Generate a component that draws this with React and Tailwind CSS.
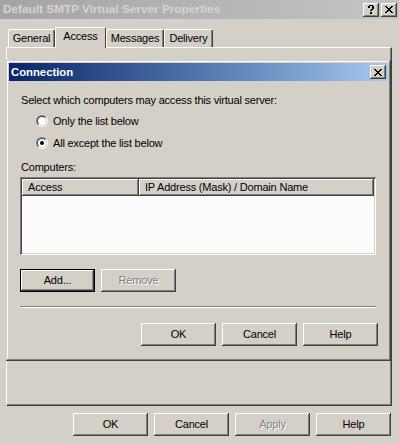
import React from 'react';

const RAISED = 'shadow-[inset_-1px_-1px_0_#404040,inset_1px_1px_0_#ffffff,inset_-2px_-2px_0_#808080,inset_2px_2px_0_#d4d0c8]';

const Button = ({ children, disabled, isDefault }) => (
  <div className={`w-[75px] h-[23px] ${isDefault ? 'border border-black' : ''}`}>
    <div className={`w-full h-full flex items-center justify-center ${RAISED}`}>
      <span className={disabled ? 'text-[#808080] [text-shadow:1px_1px_0_#ffffff]' : 'text-black'}>{children}</span>
    </div>
  </div>
);

const CloseGlyph = () => (
  <svg width="8" height="7" viewBox="0 0 8 7" shapeRendering="crispEdges">
    <path d="M0 0h2v1H0zM6 0h2v1H6zM1 1h2v1H1zM5 1h2v1H5zM2 2h4v1H2zM3 3h2v1H3zM2 4h4v1H2zM1 5h2v1H1zM5 5h2v1H5zM0 6h2v1H0zM6 6h2v1H6z" fill="#000" />
  </svg>
);

const HelpGlyph = () => (
  <svg width="6" height="9" viewBox="0 0 6 9" shapeRendering="crispEdges">
    <path d="M1 0h4v1H1zM0 1h2v2H0zM4 1h2v3H4zM3 4h2v1H3zM2 5h2v1H2zM2 7h2v2H2z" fill="#000" />
  </svg>
);

const CaptionButton = ({ children }) => (
  <div className={`w-[16px] h-[14px] bg-[#d4d0c8] flex items-center justify-center ${RAISED}`}>
    {children}
  </div>
);

const Radio = ({ checked, label }) => (
  <div className="h-[22px] flex items-center gap-[5px] pl-[27px]">
    <div className="w-[12px] h-[12px] rounded-full border border-t-[#808080] border-l-[#808080] border-r-white border-b-white">
      <div className="w-full h-full rounded-full border border-t-[#404040] border-l-[#404040] border-r-[#d4d0c8] border-b-[#d4d0c8] bg-white flex items-center justify-center">
        {checked && <div className="w-[4px] h-[4px] rounded-full bg-black" />}
      </div>
    </div>
    <span>{label}</span>
  </div>
);

const Tab = ({ label, width, selected }) => (
  <div
    className={`${width} flex items-center justify-center rounded-t-[2px] border-t border-l border-r border-t-white border-l-white border-r-[#404040] bg-[#d4d0c8] ${
      selected ? 'h-[21px] -mb-px relative z-10 pb-[3px]' : 'h-[18px] pb-px shadow-[inset_-1px_0_0_#808080]'
    }`}
  >
    {label}
  </div>
);

export default function App() {
  return (
    <div className="w-[399px] h-[444px] overflow-hidden bg-[#d4d0c8] text-[11px] leading-[13px] tracking-[-0.2px] text-black font-['Tahoma','Liberation_Sans',Arial,sans-serif] flex flex-col">
      {/* outer (inactive) caption */}
      <div className="h-[19px] pl-[3px] pr-[2px] flex items-center justify-between bg-gradient-to-r from-[#a4a4a4] to-[#c4c4c4]">
        <span className="font-bold text-[11.8px] tracking-normal text-[#d8d4cc]">Default SMTP Virtual Server Properties</span>
        <div className="flex gap-[2px]">
          <CaptionButton><HelpGlyph /></CaptionButton>
          <CaptionButton><CloseGlyph /></CaptionButton>
        </div>
      </div>

      {/* tabs */}
      <div className="mt-[8px] pl-[8px] h-[20px] flex items-end">
        <Tab label="General" width="w-[47px]" />
        <Tab label="Access" width="w-[51px]" selected />
        <Tab label="Messages" width="w-[58px]" />
        <Tab label="Delivery" width="w-[49px]" />
      </div>

      {/* tab page */}
      <div className="ml-[6px] w-[386px] h-[359px] border-t border-l border-t-white border-l-white border-r border-b border-r-[#404040] border-b-[#404040] shadow-[inset_-1px_-1px_0_#808080]">
        {/* Connection dialog */}
        <div className="mt-[12px] -ml-px w-[385px] h-[301px] p-[3px] bg-[#d4d0c8] shadow-[inset_-1px_-1px_0_#404040,inset_1px_1px_0_#d4d0c8,inset_-2px_-2px_0_#808080,inset_2px_2px_0_#ffffff] flex flex-col">
          <div className="h-[18px] pl-[2px] pr-[2px] flex items-center justify-between bg-gradient-to-r from-[#0a246a] to-[#a6caf0]">
            <span className="font-bold text-[11.3px] tracking-normal text-white">Connection</span>
            <CaptionButton><CloseGlyph /></CaptionButton>
          </div>

          <div className="mt-[13px] pl-[12px]">Select which computers may access this virtual server:</div>

          <div className="mt-[3px]">
            <Radio label="Only the list below" />
            <Radio label="All except the list below" checked />
          </div>

          <div className="mt-[7px] pl-[12px]">Computers:</div>

          {/* list view */}
          <div className="mt-[3px] ml-[11px] w-[356px] h-[78px] p-[2px] bg-[#fcfcfc] shadow-[inset_1px_1px_0_#808080,inset_-1px_-1px_0_#ffffff,inset_2px_2px_0_#404040,inset_-2px_-2px_0_#d4d0c8]">
            <div className="h-[17px] flex">
              <div className={`w-[117px] h-full flex items-center pl-[6px] bg-[#d4d0c8] ${RAISED}`}>Access</div>
              <div className={`flex-1 h-full flex items-center pl-[6px] bg-[#d4d0c8] ${RAISED}`}>IP Address (Mask) / Domain Name</div>
            </div>
          </div>

          <div className="mt-[14px] ml-[11px] flex gap-[6px]">
            <Button isDefault>Add...</Button>
            <Button disabled>Remove</Button>
          </div>

          <div className="mt-[14px] ml-[11px] w-[356px] h-[2px] border-t border-t-[#808080] border-b border-b-white" />

          <div className="mt-[15px] pr-[10px] flex justify-end gap-[6px]">
            <Button>OK</Button>
            <Button>Cancel</Button>
            <Button>Help</Button>
          </div>
        </div>
      </div>

      {/* outer buttons */}
      <div className="mt-[7px] pr-[8px] flex justify-end gap-[6px]">
        <Button>OK</Button>
        <Button>Cancel</Button>
        <Button disabled>Apply</Button>
        <Button>Help</Button>
      </div>
    </div>
  );
}
